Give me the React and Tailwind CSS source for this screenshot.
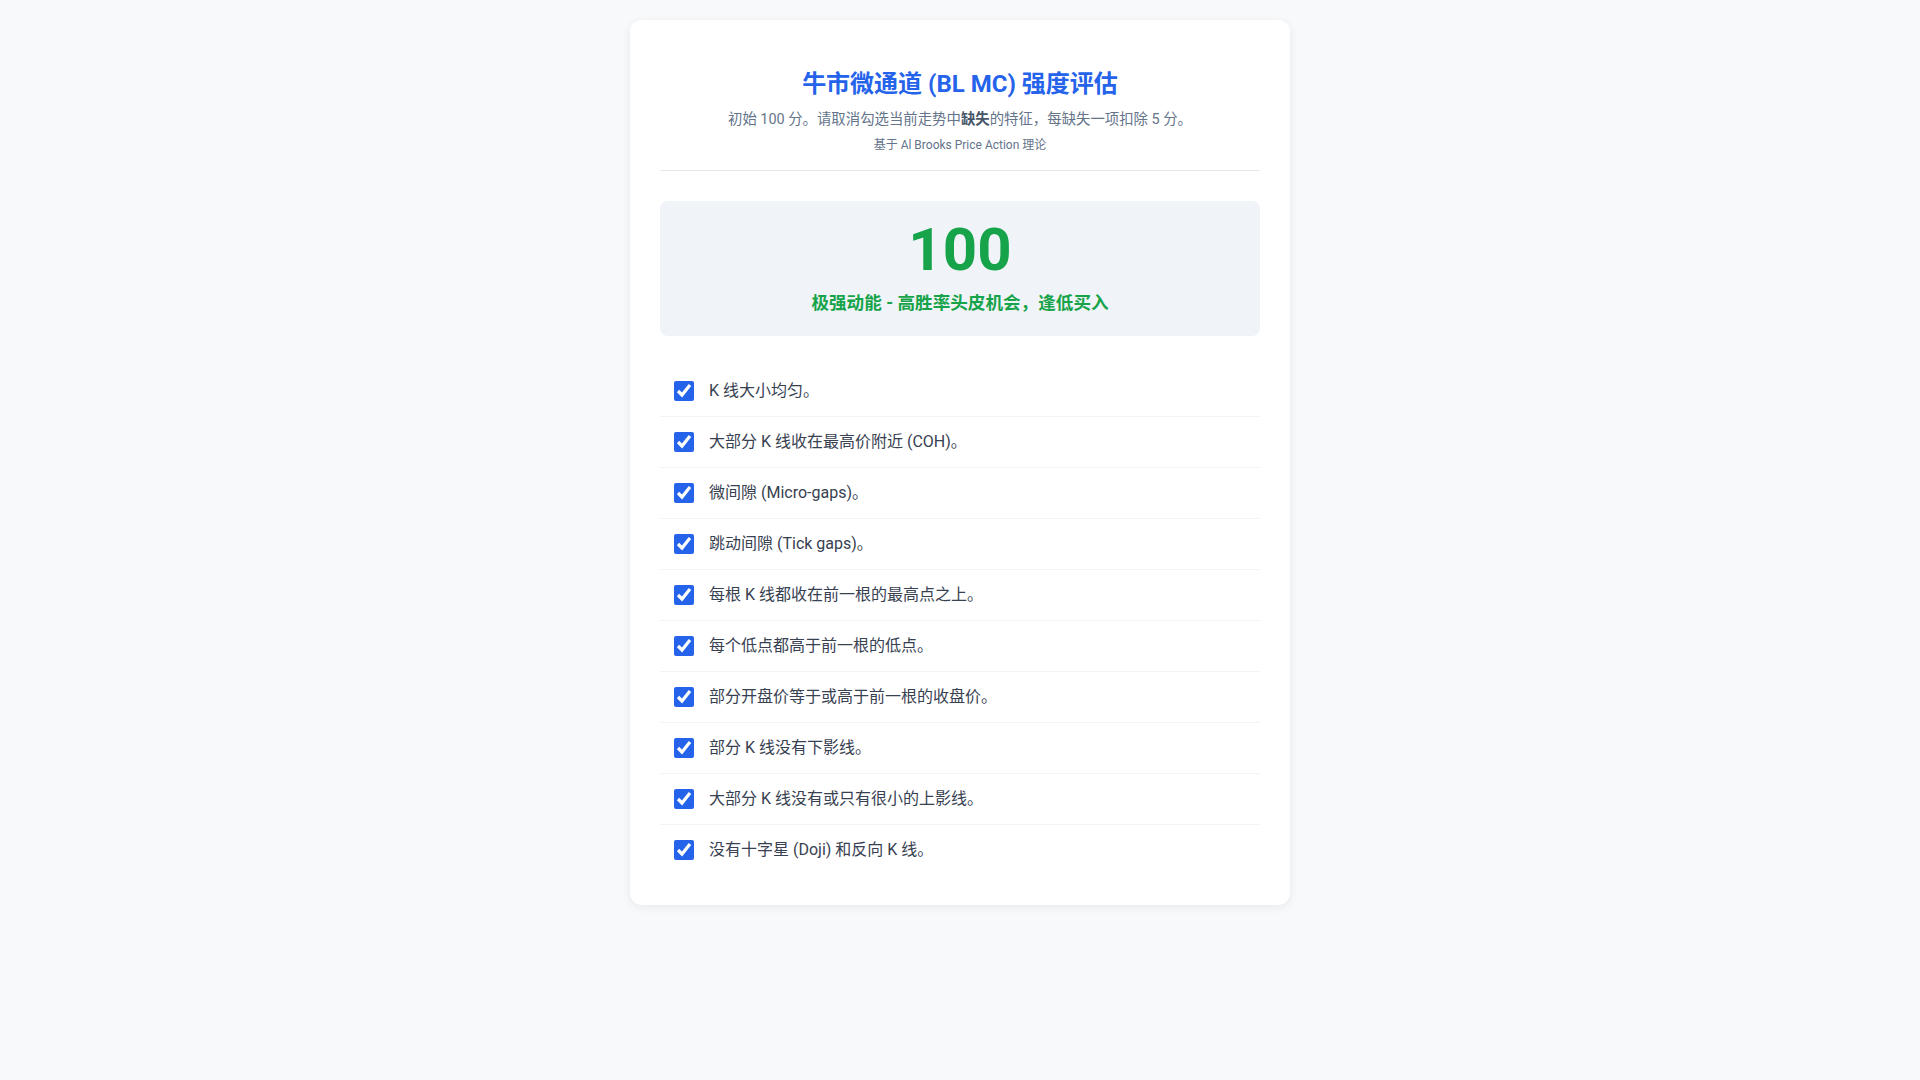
const items = [
  'K 线大小均匀。',
  '大部分 K 线收在最高价附近 (COH)。',
  '微间隙 (Micro-gaps)。',
  '跳动间隙 (Tick gaps)。',
  '每根 K 线都收在前一根的最高点之上。',
  '每个低点都高于前一根的低点。',
  '部分开盘价等于或高于前一根的收盘价。',
  '部分 K 线没有下影线。',
  '大部分 K 线没有或只有很小的上影线。',
  '没有十字星 (Doji) 和反向 K 线。',
];

export default function App() {
  return (
    <div
      className="min-h-screen bg-[#f8f9fb] pt-5"
      style={{ fontFamily: 'Roboto, "Noto Sans CJK SC", sans-serif' }}
    >
      <div className="mx-auto w-[660px] rounded-xl bg-white p-[30px] shadow-[0_2px_10px_rgba(15,23,42,0.07)]">
        {/* header */}
        <div className="border-b border-[#e5e7eb] pt-[18px] pb-[17px] text-center">
          <h1 className="text-2xl leading-8 font-bold text-[#2563eb]">
            牛市微通道 (BL MC) 强度评估
          </h1>
          <p className="mt-[10px] text-[14.4px] leading-5 text-[#64748b]">
            初始 100 分。请取消勾选当前走势中<b className="font-bold text-[#475569]">缺失</b>的特征，每缺失一项扣除 5 分。
          </p>
          <p className="mt-[7px] text-xs leading-4 text-[#64748b]">基于 Al Brooks Price Action 理论</p>
        </div>

        {/* score */}
        <div className="mt-[30px] rounded-lg bg-[#f0f4f8] pt-[19px] pb-[19px] text-center">
          <div className="text-6xl leading-none font-bold text-[#16a34a]">100</div>
          <div className="mt-[9px] text-[17.6px] leading-7 font-bold text-[#16a34a]">
            极强动能 - 高胜率头皮机会，逢低买入
          </div>
        </div>

        {/* checklist */}
        <ul className="mt-[30px]">
          {items.map((text, i) => (
            <li
              key={i}
              className={`flex items-center gap-[15px] px-3.5 py-3 ${i < items.length - 1 ? 'border-b border-[#f1f3f6]' : ''}`}
            >
              <input
                type="checkbox"
                defaultChecked
                className="m-0 h-5 w-5 shrink-0 accent-[#2563eb]"
              />
              <span className="text-base leading-[26px] text-[#374151]">{text}</span>
            </li>
          ))}
        </ul>
      </div>
    </div>
  );
}
